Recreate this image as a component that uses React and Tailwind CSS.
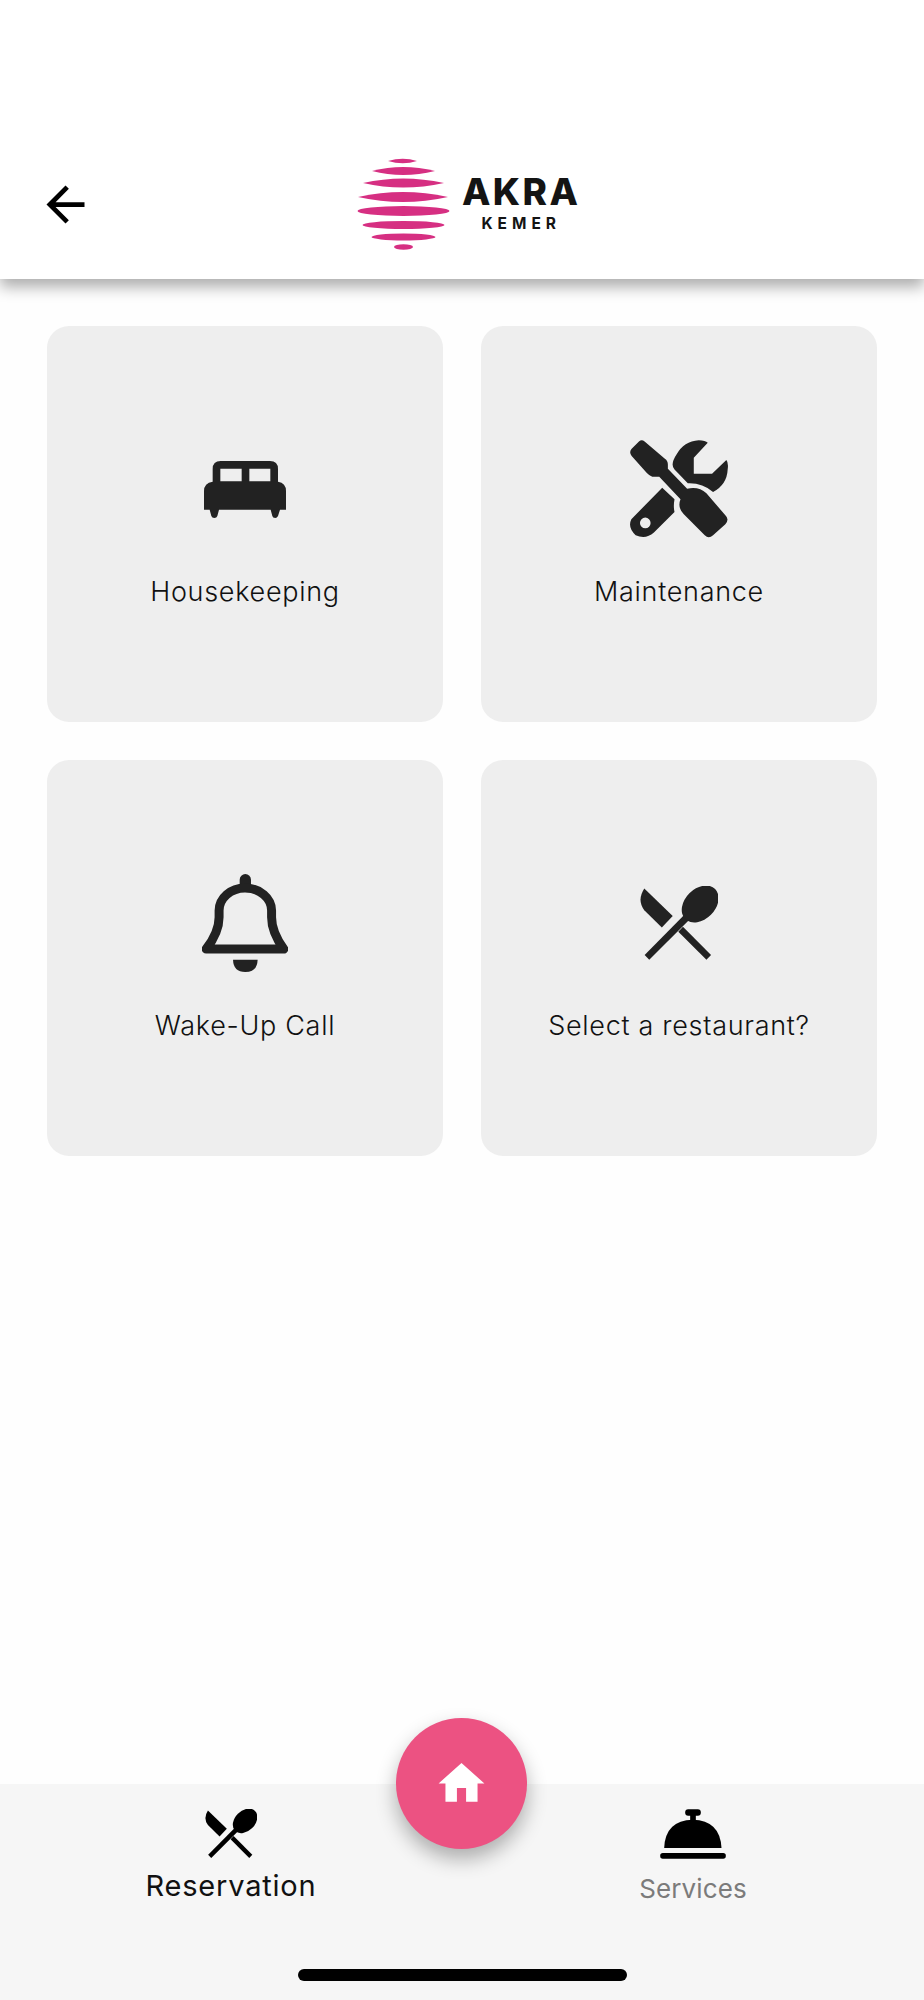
const BedIcon = () => (
  <svg viewBox="0 0 246 171" className="w-[82px] h-[57px]" fill="#222222">
    <path
      fillRule="evenodd"
      d="M26 62V24Q26 0 50 0H198Q222 0 222 24V62Q246 66 246 90V146H228L222 165Q219 171 214 171Q206 171 205 165L200 146H45L40 165Q38 171 31 171Q24 171 22 165L17 146H0V90Q0 66 26 62ZM49 23V61H113V23ZM136 23V61H199V23Z"
    />
  </svg>
);

const ToolsIcon = () => (
  <svg viewBox="178 62 295 294" className="w-[98px] h-[98px]" fill="#222222">
    <path d="M205 66Q213 58 222 66L283 118Q292 124 292 135V148L350 208Q385 200 408 222L465 288Q478 300 465 315L428 348Q415 360 403 348L340 285Q320 265 330 240L266 172H245Q235 168 228 160L183 110Q174 98 183 88Z" />
    <path d="M412 70Q405 62 385 62Q340 65 318 105Q298 135 312 150L352 192Q395 190 428 218Q470 195 472 150Q475 130 468 122L425 163H370V115Z" />
    <path
      fillRule="evenodd"
      d="M275 205L312 240Q308 262 312 278L250 340Q225 362 195 348Q170 325 182 300ZM224 295A16 16 0 1 0 224 327A16 16 0 1 0 224 295Z"
    />
  </svg>
);

const BellIcon = () => (
  <svg viewBox="214 40 258 295" className="w-[86px] h-[98px]" fill="#222222">
    <rect x="327" y="40" width="34" height="50" rx="17" />
    <path
      d="M226 266Q265 215 265 170V150A78 68 0 0 1 343 82A80 68 0 0 1 423 150V170Q423 215 460 266Z"
      fill="none"
      stroke="#222222"
      strokeWidth="27"
      strokeLinejoin="round"
    />
    <path d="M307 298H381Q380 335 344 335Q308 335 307 298Z" />
  </svg>
);

const CutleryIcon = ({ className, fill }) => (
  <svg viewBox="332 75 236 223" className={className} fill={fill}>
    <path d="M345 82L431 165L398 200L345 148Q322 118 345 82Z" />
    <path d="M462 198L547 283L533 298L448 213Z" />
    <path d="M346 283L470 158L482 176L360 298Z" />
    <ellipse cx="514" cy="129" rx="64" ry="46" transform="rotate(-45 514 129)" />
  </svg>
);

const DeskBellIcon = () => (
  <svg viewBox="480 328 197 150" className="w-[66px] h-[50px]" fill="#000000">
    <rect x="555" y="329" width="47" height="19" rx="9" />
    <rect x="570" y="345" width="17" height="20" />
    <path d="M492 445Q495 362 578 360Q660 362 664 445Z" />
    <rect x="480" y="460" width="197" height="17" rx="8" />
  </svg>
);

const Logo = () => (
  <div className="flex items-start">
    <svg viewBox="0 0 93 94" className="w-[93px] h-[94px]" fill="#d62f82">
      <path d="M31 4Q46 -0.5 60 4Q46 8.5 31 4Z" />
      <path d="M15 14Q46 6 78 14Q46 22 15 14Z" />
      <path d="M6 26Q46 17 87 26Q46 35 6 26Z" />
      <path d="M1 40Q46 30 91 40Q46 50 1 40Z" />
      <ellipse cx="46.5" cy="54" rx="46" ry="5" />
      <ellipse cx="46.5" cy="68" rx="41" ry="4" />
      <ellipse cx="46.5" cy="80" rx="32" ry="3.5" />
      <ellipse cx="46.5" cy="90" rx="9.5" ry="2.7" />
    </svg>
    <div className="ml-[12px] pt-[17px] flex flex-col items-center text-[#141414]">
      <span className="text-[37px] leading-[36px] font-extrabold tracking-[2.4px]">AKRA</span>
      <span className="text-[15.5px] leading-[18px] font-bold tracking-[5px] mt-[5px]">KEMER</span>
    </div>
  </div>
);

const ServiceCard = ({ icon, label }) => (
  <div className="h-[396px] rounded-[22px] bg-[#eeeeee] flex flex-col items-center pt-[114px]">
    <div className="h-[98px] flex items-center justify-center">{icon}</div>
    <span className="mt-[36px] text-[27px] leading-[36px] font-[270] tracking-[0.7px] text-[#111111]">
      {label}
    </span>
  </div>
);

export default function App() {
  return (
    <div className="h-[2000px] w-[924px] flex flex-col bg-[#fefefe] overflow-hidden [font-family:Inter,sans-serif]">
      <header className="relative z-10 h-[279px] shrink-0 bg-white pt-[157px] pl-[37px] flex items-start shadow-[0_8px_14px_rgba(0,0,0,0.32)]">
        <svg viewBox="0 0 24 24" className="w-[57px] h-[57px] mt-[19px]" fill="#000000">
          <path d="M20 11H7.83l5.59-5.59L12 4l-8 8 8 8 1.41-1.41L7.83 13H20v-2z" />
        </svg>
        <div className="ml-[263px]">
          <Logo />
        </div>
      </header>

      <main className="flex-1 px-[47px] pt-[47px]">
        <div className="grid grid-cols-2 gap-[38px]">
          <ServiceCard icon={<BedIcon />} label="Housekeeping" />
          <ServiceCard icon={<ToolsIcon />} label="Maintenance" />
          <ServiceCard icon={<BellIcon />} label="Wake-Up Call" />
          <ServiceCard
            icon={<CutleryIcon className="w-[78px] h-[74px]" fill="#222222" />}
            label="Select a restaurant?"
          />
        </div>
      </main>

      <nav className="relative h-[216px] shrink-0 bg-[#f6f6f6] grid grid-cols-2 pt-[25px]">
        <div className="flex flex-col items-center">
          <CutleryIcon className="w-[52px] h-[49px]" fill="#000000" />
          <span className="mt-[10px] text-[29px] leading-[36px] tracking-[0.8px] text-[#111111]">Reservation</span>
        </div>
        <div className="flex flex-col items-center">
          <DeskBellIcon />
          <span className="mt-[13px] text-[26px] leading-[34px] tracking-[0.1px] text-[#7b7b7b]">Services</span>
        </div>

        <button className="absolute left-[396px] top-[-66px] w-[131px] h-[131px] rounded-full bg-[#ec5282] flex items-center justify-center shadow-[0_10px_20px_rgba(0,0,0,0.3)]">
          <svg viewBox="0 0 24 24" className="w-[55px] h-[55px]" fill="#ffffff">
            <path d="M10 20v-6h4v6h5v-8h3L12 3 2 12h3v8z" />
          </svg>
        </button>
        <div className="absolute left-[298px] bottom-[19px] w-[329px] h-[12px] rounded-full bg-black" />
      </nav>
    </div>
  );
}
